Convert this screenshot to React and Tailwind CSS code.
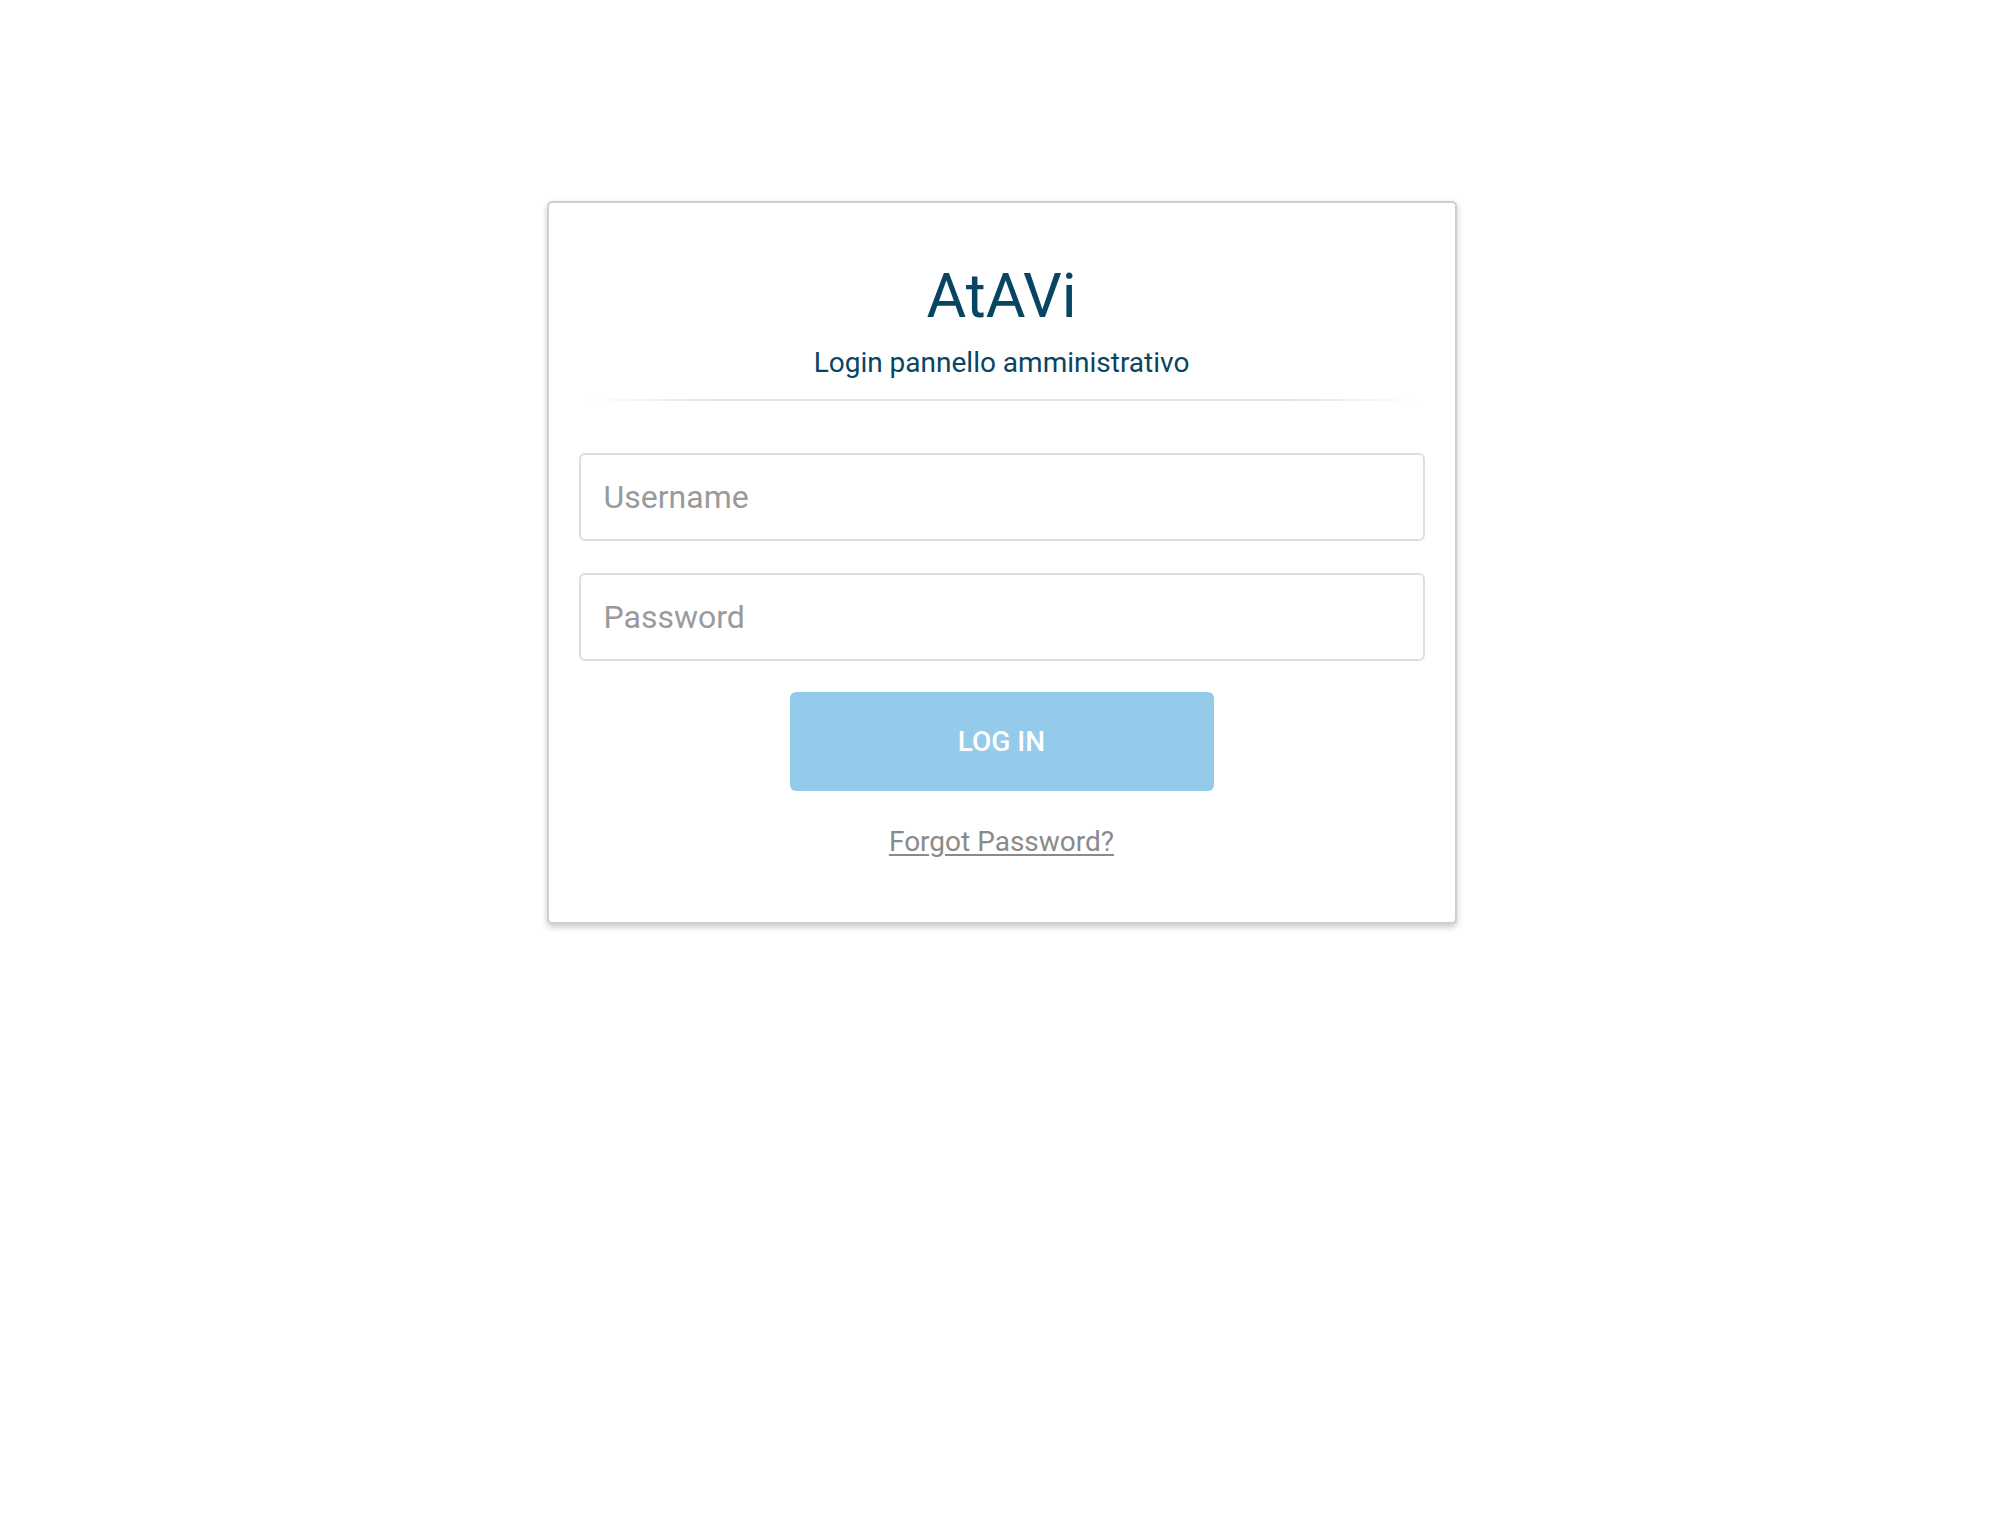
import React, { useState } from "react";

export default function App() {
	const [username, setUsername] = useState("");
	const [password, setPassword] = useState("");

	return (
		<div className="min-h-screen w-full bg-white font-['Roboto','Liberation_Sans',sans-serif]">
			<div className="flex justify-center pl-[3px] pt-[201px]">
				{/* Login card */}
				<div className="w-[910px] rounded-[5px] border-2 border-[#cfcfcf] bg-white px-[30px] pb-[64px] pt-[63px] shadow-[0_3px_6px_rgba(0,0,0,0.22)]">
					<h1 className="text-center text-[61px] font-normal leading-none text-[#084563]">AtAVi</h1>
					<p className="mt-[22px] text-center text-[28px] leading-none text-[#084563]">Login pannello amministrativo</p>
					<div className="mx-[8px] mt-[22px] h-[2px] bg-[linear-gradient(90deg,rgba(225,225,225,0)_0%,#e4e4e4_15%,#e4e4e4_85%,rgba(225,225,225,0)_100%)]" />

					<form className="mt-[52px] flex flex-col" onSubmit={(e) => e.preventDefault()}>
						<input
							type="text"
							value={username}
							onChange={(e) => setUsername(e.target.value)}
							placeholder="Username"
							className="h-[88px] w-full rounded-[6px] border-2 border-[#dedede] px-[23px] text-[32px] text-[#333] outline-none placeholder:text-[#9a9a9a]"
						/>
						<input
							type="password"
							value={password}
							onChange={(e) => setPassword(e.target.value)}
							placeholder="Password"
							className="mt-[32px] h-[88px] w-full rounded-[6px] border-2 border-[#dedede] px-[23px] text-[32px] text-[#333] outline-none placeholder:text-[#9a9a9a]"
						/>
						<button
							type="submit"
							className="mx-auto mt-[31px] h-[99px] w-[424px] rounded-[6px] bg-[#94cbeb] text-[28px] font-medium leading-none text-white">
							LOG IN
						</button>
					</form>

					<div className="mt-[37px] text-center">
						<a href="#" className="text-[28px] leading-none text-[#8a8a8a] underline underline-offset-[3px]">
							Forgot Password?
						</a>
					</div>
				</div>
			</div>
		</div>
	);
}
